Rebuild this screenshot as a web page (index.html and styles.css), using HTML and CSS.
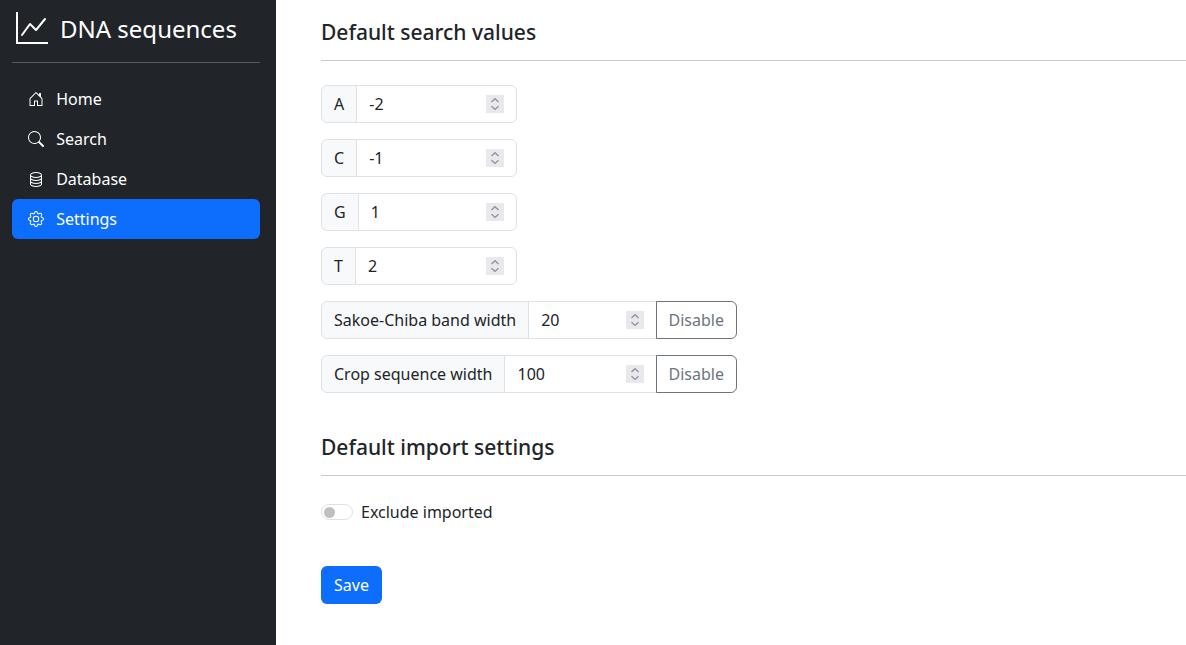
FILE: index.html
```html
<!DOCTYPE html>
<html lang="en">
<head>
<meta charset="utf-8">
<title>DNA sequences</title>
<link rel="stylesheet" href="styles.css">
</head>
<body>
<svg class="defs" aria-hidden="true">
  <symbol id="spin" viewBox="0 0 18 18">
    <rect width="18" height="18" fill="#e9e9ed"/>
    <path d="M5.5 7 9 3.8 12.5 7M5.5 11.2 9 14.4l3.5-3.2" fill="none" stroke="#9292a0" stroke-width="1.4"/>
  </symbol>
</svg>
<aside class="sidebar">
  <a class="brand" href="#">
    <svg class="brand-icon" viewBox="0 0 16 16"><path fill-rule="evenodd" d="M0 0h1v15h15v1H0V0Zm14.817 3.113a.5.5 0 0 1 .07.704l-4.5 5.5a.5.5 0 0 1-.74.037L7.06 6.767l-3.656 5.027a.5.5 0 0 1-.808-.588l4-5.5a.5.5 0 0 1 .758-.06l2.609 2.61 4.15-5.073a.5.5 0 0 1 .704-.07Z"/></svg>
    <span class="brand-name">DNA sequences</span>
  </a>
  <nav class="nav">
    <a class="nav-link" href="#">
      <svg class="nav-icon" viewBox="0 0 16 16"><path d="M8.354 1.146a.5.5 0 0 0-.708 0l-6 6A.5.5 0 0 0 1.5 7.5v7a.5.5 0 0 0 .5.5h4.5a.5.5 0 0 0 .5-.5v-4h2v4a.5.5 0 0 0 .5.5H14a.5.5 0 0 0 .5-.5v-7a.5.5 0 0 0-.146-.354L13 5.793V2.5a.5.5 0 0 0-.5-.5h-1a.5.5 0 0 0-.5.5v1.293L8.354 1.146ZM2.5 14V7.707l5.5-5.5 5.5 5.5V14H10v-4a.5.5 0 0 0-.5-.5h-3a.5.5 0 0 0-.5.5v4H2.5Z"/></svg>
      Home
    </a>
    <a class="nav-link" href="#">
      <svg class="nav-icon" viewBox="0 0 16 16"><path d="M11.742 10.344a6.5 6.5 0 1 0-1.397 1.398h-.001c.03.04.062.078.098.115l3.85 3.85a1 1 0 0 0 1.415-1.414l-3.85-3.85a1.007 1.007 0 0 0-.115-.1zM12 6.5a5.5 5.5 0 1 1-11 0 5.5 5.5 0 0 1 11 0z"/></svg>
      Search
    </a>
    <a class="nav-link" href="#">
      <svg class="nav-icon" viewBox="0 0 16 16"><path d="M4.318 2.687C5.234 2.271 6.536 2 8 2s2.766.27 3.682.687C12.644 3.125 13 3.627 13 4c0 .374-.356.875-1.318 1.313C10.766 5.729 9.464 6 8 6s-2.766-.27-3.682-.687C3.356 4.875 3 4.373 3 4c0-.374.356-.875 1.318-1.313ZM13 5.698V7c0 .374-.356.875-1.318 1.313C10.766 8.729 9.464 9 8 9s-2.766-.27-3.682-.687C3.356 7.875 3 7.373 3 7V5.698c.271.202.58.378.904.525C4.978 6.711 6.427 7 8 7s3.022-.289 4.096-.777A4.92 4.92 0 0 0 13 5.698ZM14 4c0-1.007-.875-1.755-1.904-2.223C11.022 1.289 9.573 1 8 1s-3.022.289-4.096.777C2.875 2.245 2 2.993 2 4v9c0 1.007.875 1.755 1.904 2.223C4.978 15.71 6.427 16 8 16s3.022-.289 4.096-.777C13.125 14.755 14 14.007 14 13V4Zm-1 4.698V10c0 .374-.356.875-1.318 1.313C10.766 11.729 9.464 12 8 12s-2.766-.27-3.682-.687C3.356 10.875 3 10.373 3 10V8.698c.271.202.58.378.904.525C4.978 9.71 6.427 10 8 10s3.022-.289 4.096-.777A4.92 4.92 0 0 0 13 8.698Zm0 3V13c0 .374-.356.875-1.318 1.313C10.766 14.729 9.464 15 8 15s-2.766-.27-3.682-.687C3.356 13.875 3 13.373 3 13v-1.302c.271.202.58.378.904.525C4.978 12.71 6.427 13 8 13s3.022-.289 4.096-.777c.324-.147.633-.323.904-.525Z"/></svg>
      Database
    </a>
    <a class="nav-link active" href="#">
      <svg class="nav-icon" viewBox="0 0 16 16"><path d="M8 4.754a3.246 3.246 0 1 0 0 6.492 3.246 3.246 0 0 0 0-6.492zM5.754 8a2.246 2.246 0 1 1 4.492 0 2.246 2.246 0 0 1-4.492 0z"/><path d="M9.796 1.343c-.527-1.79-3.065-1.79-3.592 0l-.094.319a.873.873 0 0 1-1.255.52l-.292-.16c-1.64-.892-3.433.902-2.54 2.541l.159.292a.873.873 0 0 1-.52 1.255l-.319.094c-1.79.527-1.79 3.065 0 3.592l.319.094a.873.873 0 0 1 .52 1.255l-.16.292c-.892 1.64.901 3.434 2.541 2.54l.292-.159a.873.873 0 0 1 1.255.52l.094.319c.527 1.79 3.065 1.79 3.592 0l.094-.319a.873.873 0 0 1 1.255-.52l.292.16c1.64.893 3.434-.902 2.54-2.541l-.159-.292a.873.873 0 0 1 .52-1.255l.319-.094c1.79-.527 1.79-3.065 0-3.592l-.319-.094a.873.873 0 0 1-.52-1.255l.16-.292c.893-1.64-.902-3.433-2.541-2.54l-.292.159a.873.873 0 0 1-1.255-.52l-.094-.319zm-2.633.283c.246-.835 1.428-.835 1.674 0l.094.319a1.873 1.873 0 0 0 2.693 1.115l.291-.16c.764-.415 1.6.42 1.184 1.185l-.159.292a1.873 1.873 0 0 0 1.116 2.692l.318.094c.835.246.835 1.428 0 1.674l-.319.094a1.873 1.873 0 0 0-1.115 2.693l.16.291c.415.764-.42 1.6-1.185 1.184l-.291-.159a1.873 1.873 0 0 0-2.693 1.116l-.094.318c-.246.835-1.428.835-1.674 0l-.094-.319a1.873 1.873 0 0 0-2.692-1.115l-.292.16c-.764.415-1.6-.42-1.184-1.185l.159-.291A1.873 1.873 0 0 0 1.945 8.93l-.319-.094c-.835-.246-.835-1.428 0-1.674l.319-.094A1.873 1.873 0 0 0 3.06 4.377l-.16-.292c-.415-.764.42-1.6 1.185-1.184l.292.159a1.873 1.873 0 0 0 2.692-1.115l.094-.319z"/></svg>
      Settings
    </a>
  </nav>
</aside>
<main class="content">
  <h2 class="section-title">Default search values</h2>
  <form class="fields">
    <label class="input-group"><span class="addon">A</span><span class="control"><input class="value" value="-2"><svg class="spinner"><use href="#spin"/></svg></span></label>
    <label class="input-group"><span class="addon">C</span><span class="control"><input class="value" value="-1"><svg class="spinner"><use href="#spin"/></svg></span></label>
    <label class="input-group"><span class="addon">G</span><span class="control"><input class="value" value="1"><svg class="spinner"><use href="#spin"/></svg></span></label>
    <label class="input-group"><span class="addon">T</span><span class="control"><input class="value" value="2"><svg class="spinner"><use href="#spin"/></svg></span></label>
    <div class="input-group wide"><span class="addon">Sakoe-Chiba band width</span><span class="control"><input class="value" value="20"><svg class="spinner"><use href="#spin"/></svg></span><button class="btn-outline" type="button">Disable</button></div>
    <div class="input-group wide"><span class="addon">Crop sequence width</span><span class="control"><input class="value" value="100"><svg class="spinner"><use href="#spin"/></svg></span><button class="btn-outline" type="button">Disable</button></div>
  </form>
  <h2 class="section-title">Default import settings</h2>
  <label class="switch"><span class="track"><span class="knob"></span></span>Exclude imported</label>
  <button class="btn-primary" type="button">Save</button>
</main>
</body>
</html>
```
FILE: styles.css
```css
* { box-sizing: border-box; }

body {
  margin: 0;
  display: flex;
  height: 645px;
  overflow: hidden;
  background: #fff;
  color: #212529;
  font: 400 16px/24px "Noto Sans", "Liberation Sans", sans-serif;
}

.defs { position: absolute; width: 0; height: 0; }

.sidebar {
  flex: none;
  width: 276px;
  padding: 0 16px 0 12px;
  background: #212529;
}

.brand {
  display: flex;
  align-items: center;
  gap: 12px;
  height: 63px;
  padding: 0 4px 6px;
  border-bottom: 1px solid #585c5f;
  color: #fff;
  font-size: 24px;
  line-height: 36px;
  text-decoration: none;
}

.brand-icon { width: 32px; height: 32px; fill: currentColor; }

.brand-name { padding-top: 2px; }

.nav { padding-top: 16px; }

.nav-link {
  display: flex;
  align-items: center;
  gap: 12.16px;
  height: 40px;
  padding: 0 16px;
  border-radius: 6px;
  color: #fff;
  text-decoration: none;
}

.nav-link.active { background: #0d6efd; }

.nav-icon { width: 16px; height: 16px; fill: currentColor; }

.content { flex: 1; padding: 19px 0 0 45px; }

.section-title {
  height: 42px;
  margin: 0 0 24px;
  border-bottom: 1px solid #c7c8c9;
  font-size: 21px;
  font-weight: 500;
  line-height: 26px;
}

.fields {
  display: flex;
  flex-direction: column;
  gap: 16px;
  margin-bottom: 41px;
}

.input-group { display: flex; width: 196px; height: 38px; }

.input-group.wide { width: 416px; }

.addon {
  flex: none;
  padding: 6px 12px;
  border: 1px solid #dee2e6;
  border-radius: 6px 0 0 6px;
  background: #f8f9fa;
}

.control {
  flex: 1;
  min-width: 0;
  display: flex;
  align-items: center;
  margin-left: -1px;
  padding: 0 12px;
  border: 1px solid #dee2e6;
  border-radius: 0 6px 6px 0;
  background: #fff;
}

.wide .control { border-radius: 0; }

.value {
  flex: 1;
  min-width: 0;
  padding: 0;
  border: 0;
  outline: 0;
  background: none;
  color: inherit;
  font: inherit;
}

.spinner { flex: none; width: 18px; height: 18px; }

.btn-outline {
  flex: none;
  width: 81px;
  margin-left: -1px;
  padding: 0 0.5px 0 0;
  border: 1px solid #6c757d;
  border-radius: 0 6px 6px 0;
  background: #fff;
  color: #6c757d;
  font: inherit;
}

.switch {
  display: flex;
  align-items: center;
  gap: 8px;
  margin-bottom: 42px;
}

.track {
  display: flex;
  align-items: center;
  width: 32px;
  height: 16px;
  padding-left: 1.5px;
  border: 1px solid #dee2e6;
  border-radius: 8px;
}

.knob { width: 11px; height: 11px; border-radius: 50%; background: #bfbfbf; }

.btn-primary {
  height: 38px;
  padding: 0 13px;
  border: 0;
  border-radius: 6px;
  background: #0d6efd;
  color: #fff;
  font: inherit;
}
```
